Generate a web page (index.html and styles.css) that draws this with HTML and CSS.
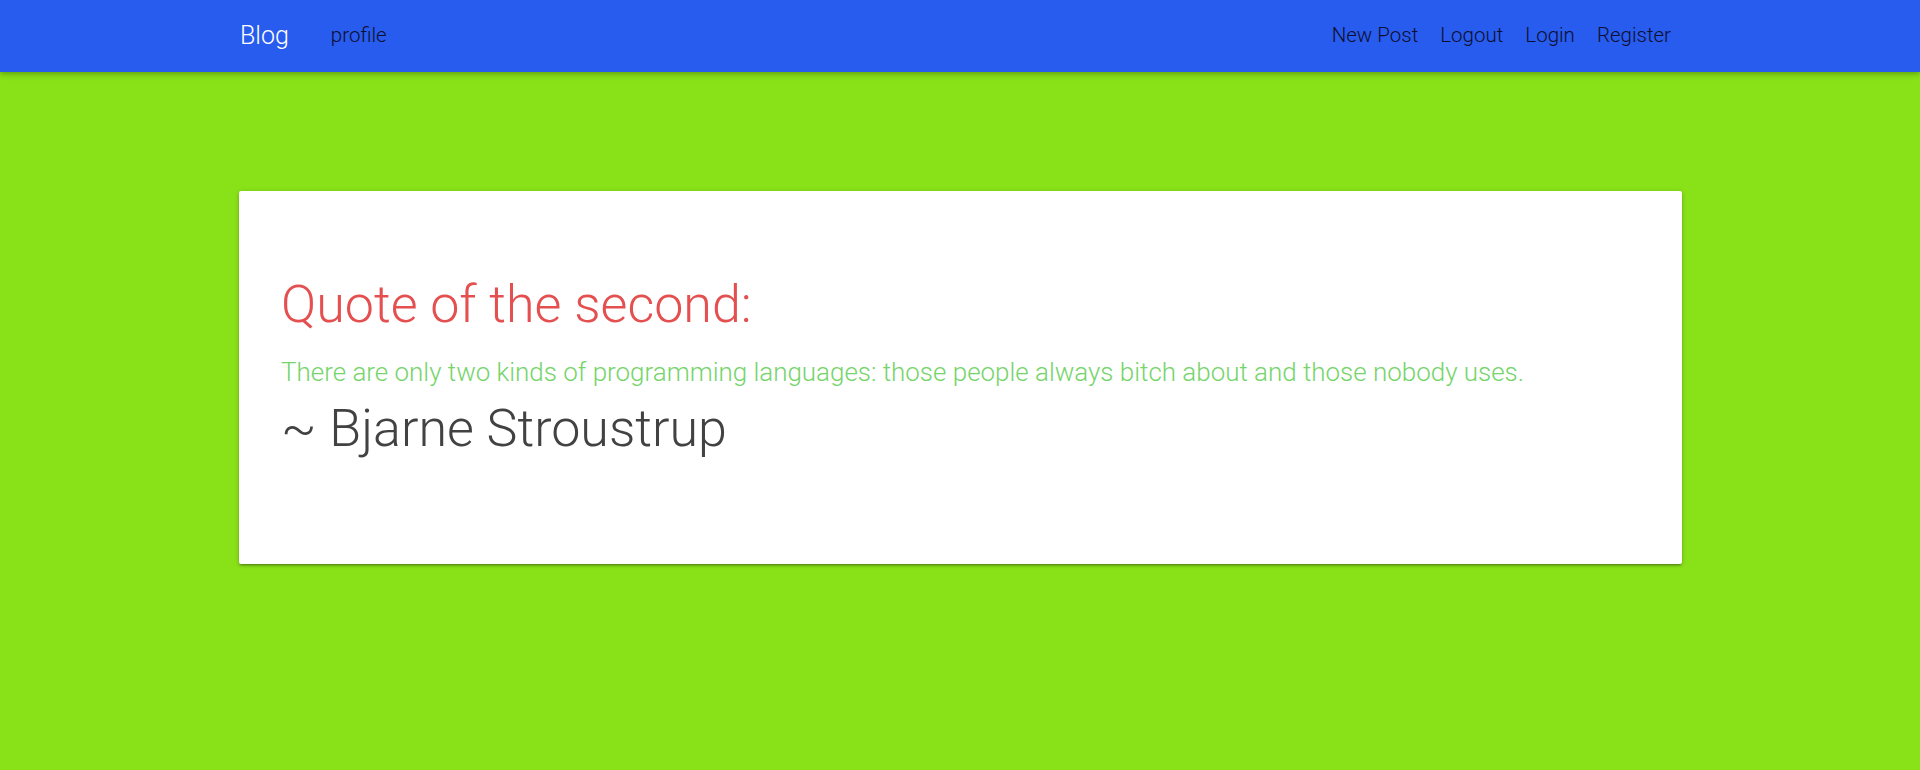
FILE: index.html
```html
<!DOCTYPE html>
<html lang="en">
<head>
<meta charset="utf-8">
<title>Blog</title>
<link rel="stylesheet" href="styles.css">
</head>
<body>
<nav class="navbar">
  <div class="nav-inner">
    <div class="nav-left">
      <a class="brand" href="#">Blog</a>
      <a class="nav-link" href="#">profile</a>
    </div>
    <div class="nav-right">
      <a class="nav-link" href="#">New Post</a>
      <a class="nav-link" href="#">Logout</a>
      <a class="nav-link" href="#">Login</a>
      <a class="nav-link" href="#">Register</a>
    </div>
  </div>
</nav>
<main class="main">
  <section class="card">
    <h2 class="quote-title">Quote of the second:</h2>
    <p class="quote-text">There are only two kinds of programming languages: those people always bitch about and those nobody uses.</p>
    <h3 class="quote-author">~ Bjarne Stroustrup</h3>
  </section>
</main>
</body>
</html>
```
FILE: styles.css
```css
* { box-sizing: border-box; }
html, body { margin: 0; padding: 0; }
body {
  background: #89e218;
  font-family: Roboto, "Liberation Sans", sans-serif;
  font-weight: 300;
  min-height: 770px;
}
.navbar {
  background: #275cee;
  height: 72px;
  box-shadow: 0 2px 4px rgba(0,0,0,0.18), 0 2px 8px rgba(0,0,0,0.12);
  position: relative;
  z-index: 1;
}
.nav-inner {
  width: 1440px;
  margin: 0 auto;
  height: 100%;
  display: flex;
  align-items: center;
  justify-content: space-between;
  padding-right: 9px;
  padding-bottom: 2px;
}
.nav-left, .nav-right {
  display: flex;
  align-items: center;
}
.nav-left { gap: 42px; }
.nav-right { gap: 22px; }
.navbar a { text-decoration: none; }
.brand {
  color: #ffffff;
  font-size: 25px;
  font-weight: 300;
}
.nav-link {
  color: #0e0e2e;
  font-size: 20.5px;
  font-weight: 300;
}
.main {
  padding-top: 119px;
}
.card {
  width: 1443px;
  margin-left: 239px;
  background: #ffffff;
  border-radius: 2px;
  box-shadow: 0 2px 2px rgba(0,0,0,0.14), 0 3px 1px -2px rgba(0,0,0,0.12), 0 1px 5px rgba(0,0,0,0.2);
  padding: 83px 42px 80px;
  height: 373px;
}
.quote-title {
  margin: 0;
  color: #e44f4f;
  font-size: 52px;
  font-weight: 300;
  line-height: 1.2;
}
.quote-text {
  margin: 18px 0 0;
  color: #75d46a;
  font-size: 25.95px;
  font-weight: 300;
  line-height: 1.4;
}
.quote-author {
  margin: 7px 0 0;
  color: #424242;
  font-size: 52px;
  font-weight: 300;
  line-height: 1.2;
}
```
